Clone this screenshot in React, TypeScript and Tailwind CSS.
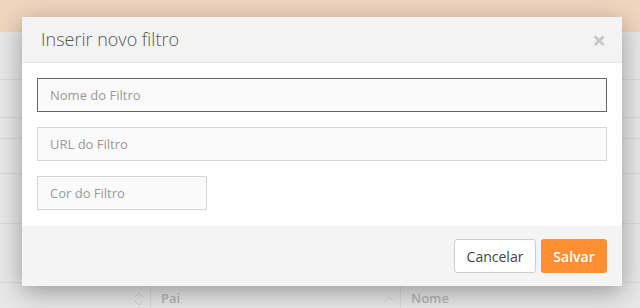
export default function App() {
  const rows = [40, 38, 21, 35, 50, 59];
  return (
    <div
      className="relative h-[308px] w-[640px] overflow-hidden bg-[#e8e8e8]"
      style={{ fontFamily: '"Open Sans", "Liberation Sans", sans-serif' }}
    >
      {/* dimmed page behind the modal */}
      <div className="h-8 bg-[#f0d6bf]" />
      <div className="h-[8px]" />
      {rows.map((h, i) => (
        <div key={i} className="border-b border-[#dadada]" style={{ height: h }} />
      ))}
      <div className="flex h-[32px] items-center text-[13px] font-semibold text-[#b5b5b5]">
        <div className="flex h-full w-[150px] items-center justify-end pr-[6px]">
          <svg width="10" height="14" viewBox="0 0 10 14" fill="none" stroke="#cfcfcf" strokeWidth="1">
            <path d="M1 5l4-4 4 4M1 9l4 4 4-4" />
          </svg>
        </div>
        <div className="flex h-full w-[250px] items-center justify-between border-l border-[#dadada] pl-2.5 pr-[6px]">
          <span>Pai</span>
          <svg width="10" height="6" viewBox="0 0 10 6" fill="none" stroke="#cfcfcf" strokeWidth="1">
            <path d="M1 5l4-4 4 4" />
          </svg>
        </div>
        <div className="flex h-full items-center border-l border-[#dadada] pl-2.5">
          <span>Nome</span>
        </div>
      </div>

      {/* modal */}
      <div className="absolute left-[22px] top-[17px] w-[600px] bg-white shadow-[0_6px_24px_rgba(0,0,0,0.35)]">
        <div className="flex h-[46px] items-center justify-between border-b border-[#e5e5e5] bg-[#f3f3f3] pl-[19px] pr-[16px]">
          <h4 className="text-[18px] font-light text-[#555]">Inserir novo filtro</h4>
          <span className="text-[24px] font-bold leading-none text-[#c6c6c6]">×</span>
        </div>
        <div className="flex flex-col gap-[15px] px-[15px] pb-[16px] pt-[15px]">
          <input
            placeholder="Nome do Filtro"
            className="h-[34px] w-full border border-[#666] bg-[#fafafa] px-3 text-[13px] text-[#555] outline-none placeholder:text-[#999]"
          />
          <input
            placeholder="URL do Filtro"
            className="h-[34px] w-full border border-[#d5d5d5] bg-[#fafafa] px-3 text-[13px] text-[#555] outline-none placeholder:text-[#999]"
          />
          <input
            placeholder="Cor do Filtro"
            className="h-[34px] w-[170px] border border-[#d5d5d5] bg-[#fafafa] px-3 text-[13px] text-[#555] outline-none placeholder:text-[#999]"
          />
        </div>
        <div className="flex h-[60px] items-center justify-end gap-[5px] bg-[#f4f4f4] px-[15px]">
          <button className="h-[34px] w-[82px] rounded-[3px] border border-[#ccc] bg-white text-[14px] text-[#444]">
            Cancelar
          </button>
          <button className="h-[34px] w-[66px] rounded-[3px] bg-[#ff8f33] text-[14px] font-semibold text-white">
            Salvar
          </button>
        </div>
      </div>
    </div>
  );
}
